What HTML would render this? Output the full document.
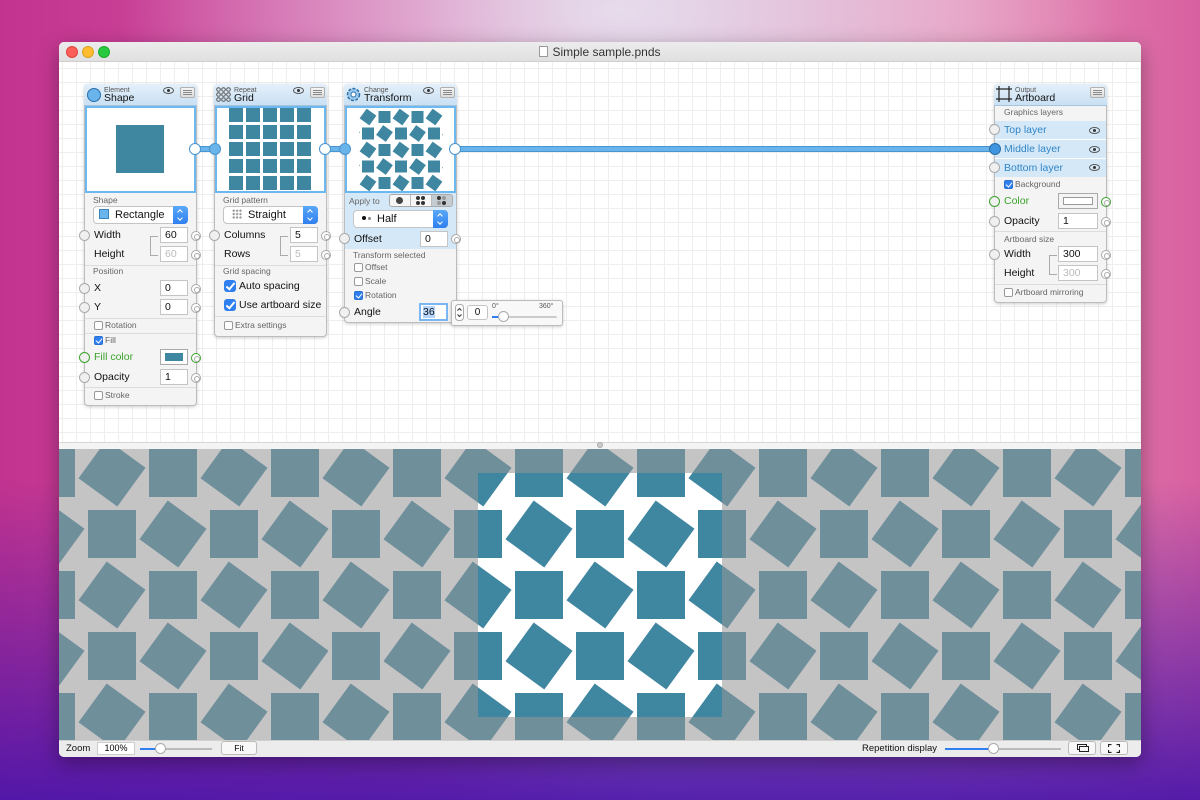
<!DOCTYPE html>
<html><head><meta charset="utf-8"><style>
*{box-sizing:border-box;margin:0;padding:0}
body{width:1200px;height:800px;overflow:hidden;position:relative;font-family:"Liberation Sans",sans-serif;
background:
radial-gradient(ellipse 500px 260px at 620px 10px,#e6dcec 0%,rgba(230,220,236,0) 100%),
linear-gradient(180deg,rgba(0,0,0,0) 60%,rgba(70,20,170,.9) 100%),
linear-gradient(90deg,#c2338f 0%,#d65aa6 35%,#dca0c8 55%,#e890b8 80%,#d860a0 100%);}
.a{position:absolute}
.win{position:absolute;left:59px;top:42px;width:1082px;height:715px;background:#fff;border-radius:5px;overflow:hidden;box-shadow:0 6px 20px rgba(0,0,0,.35)}
.title{position:absolute;left:0;top:0;width:1082px;height:20px;background:linear-gradient(#ececec,#e0e0e0);border-bottom:1px solid #cfcfcf;text-align:center;font-size:12px;line-height:20px;color:#333}
.dot{position:absolute;top:4px;width:12px;height:12px;border-radius:50%}
.editor{position:absolute;left:0;top:20px;width:1082px;height:380px;background-color:#fff;
background-image:linear-gradient(#eeeeee 1px,transparent 1px),linear-gradient(90deg,#eeeeee 1px,transparent 1px);background-size:14px 14px;background-position:3px 6px}
.node{position:absolute;background:#f4f4f4;border:1px solid #bdbdbd;border-radius:4px;box-shadow:0 1px 3px rgba(0,0,0,.2)}
.hdr{position:absolute;left:0;top:0;right:0;height:22px;background:linear-gradient(#e4f0fa,#c9e0f3);border-bottom:1px solid #a8c4dc;border-radius:3px 3px 0 0}
.t{position:absolute;font-size:10.5px;line-height:14px;color:#111;white-space:nowrap}
.s{position:absolute;font-size:8.5px;line-height:12px;color:#666;white-space:nowrap}
.sm{position:absolute;font-size:7px;line-height:8px;color:#555}
.in{position:absolute;height:16px;background:#fff;border:1px solid #c4c4c4;font-size:10.5px;line-height:14px;padding-left:4px;color:#111}
.dis{color:#bbb}
.sep{position:absolute;height:1px;background:#dcdcdc}
.cb{position:absolute;width:9px;height:9px;border:1px solid #999;border-radius:2px;background:#fff}
.cbc{background:#2f7ff0;border-color:#2a6fd0}
.cbc::after{content:"";position:absolute;left:2px;top:0px;width:3px;height:5px;border:solid #fff;border-width:0 1.5px 1.5px 0;transform:rotate(40deg)}
.bcb{position:absolute;width:12px;height:12px;border-radius:3px;background:#2f7ff0}
.bcb::after{content:"";position:absolute;left:4px;top:1px;width:3px;height:7px;border:solid #fff;border-width:0 2px 2px 0;transform:rotate(40deg)}
.pop{position:absolute;height:18px;background:#fff;border:1px solid #c4c4c4;border-radius:4px;font-size:11px;line-height:16px;color:#111}
.step{position:absolute;right:-1px;top:-1px;width:15px;height:18px;background:linear-gradient(#5aa8f8,#2f7ff0);border-radius:0 4px 4px 0}
.step::before{content:"";position:absolute;left:5px;top:4px;width:3px;height:3px;border:solid #fff;border-width:1px 0 0 1px;transform:rotate(45deg)}
.step::after{content:"";position:absolute;left:5px;top:10px;width:3px;height:3px;border:solid #fff;border-width:0 1px 1px 0;transform:rotate(45deg)}
.lc{position:absolute;width:11px;height:11px;border-radius:50%;background:#f0f0f0;border:1px solid #aaa}
.rc{position:absolute;width:10px;height:10px;border-radius:50%;background:#fff;border:1px solid #aaa}
.rc::after{content:"";position:absolute;left:2px;top:2px;width:4px;height:4px;border-radius:50%;border:1px solid #aaa}
.g{color:#3aa32a}
.bl{color:#2f86c8}
.menu{position:absolute;width:15px;height:11px;border:1px solid #b0b0b0;border-radius:2px;background:linear-gradient(#f4f4f4,#ddd)}
.menu::after{content:"";position:absolute;left:2px;top:2px;width:9px;height:1px;background:#888;box-shadow:0 2px 0 #888,0 4px 0 #888}
.eye{position:absolute;width:11px;height:7px;border:1px solid #555;border-radius:50%/50%}
.eye::after{content:"";position:absolute;left:3px;top:1px;width:3px;height:3px;border-radius:50%;background:#333}
.wire{position:absolute;height:6px;background:#6ab4ec;border:1px solid #4a94d0;border-radius:3px}
.hl{position:absolute;background:#d5e8f7}
.d{position:absolute;width:4px;height:4px;border-radius:50%;background:#333}
</style></head><body>
<div class="win">
 <div class="title"><span style="display:inline-block;width:9px;height:11px;border:1px solid #999;background:#fff;vertical-align:-1px;margin-right:4px"></span>Simple sample.pnds
  <div class="dot" style="left:7px;background:#fe5f57;border:1px solid #e0443e"></div>
  <div class="dot" style="left:23px;background:#febc2e;border:1px solid #dea123"></div>
  <div class="dot" style="left:39px;background:#28c840;border:1px solid #1aab29"></div>
 </div>
 <div class="editor"></div>
 <div class="a" style="left:0;top:400px;width:1082px;height:7px;background:#f4f4f4;border-top:1px solid #d6d6d6"></div>
 <div class="a" style="left:538px;top:400px;width:6px;height:6px;border-radius:50%;background:#ccc;border:1px solid #aaa"></div>
 <svg class="a" style="left:0;top:407px" width="1082" height="291">
  <defs>
   <rect id="sq" x="-24" y="-24" width="48" height="48" fill="#3f86a1"/>
   <g id="rq"><rect x="-24" y="-24" width="48" height="48" fill="#3f86a1" transform="rotate(36)"/></g>
   <pattern id="pt" patternUnits="userSpaceOnUse" x="419" y="24" width="122" height="122">
    <rect width="122" height="122" fill="#fff"/>
    <use href="#rq" x="0" y="0"/><use href="#rq" x="122" y="0"/><use href="#rq" x="0" y="122"/><use href="#rq" x="122" y="122"/><use href="#rq" x="61" y="61"/>
    <use href="#sq" x="61" y="0"/><use href="#sq" x="0" y="61"/><use href="#sq" x="122" y="61"/><use href="#sq" x="61" y="122"/>
   </pattern>
  </defs>
  <rect width="1082" height="291" fill="url(#pt)"/>
  <path fill-rule="evenodd" fill="rgba(150,150,150,0.56)" d="M0 0H1082V291H0Z M419 24V268H663V24Z"/>
 </svg>
 <div class="a" style="left:0;top:698px;width:1082px;height:17px;background:#ececec;border-top:1px solid #d0d0d0"></div>
</div>

<!-- wires -->
<div class="wire" style="left:193px;top:146px;width:24px"></div>
<div class="wire" style="left:323px;top:146px;width:24px"></div>
<div class="wire" style="left:451px;top:146px;width:546px"></div>

<!-- SHAPE NODE -->
<div class="node" style="left:84px;top:84px;width:113px;height:322px"></div>
<div class="hdr" style="left:84px;top:84px;width:113px;position:absolute"></div>
<div class="a" style="left:87px;top:88px;width:14px;height:14px;border-radius:50%;background:#6ab4ec;border:1.5px solid #2a6fa8"></div>
<div class="sm" style="left:104px;top:87px">Element</div>
<div class="t" style="left:104px;top:91px;font-size:10.5px">Shape</div>
<div class="eye" style="left:163px;top:87px"></div>
<div class="menu" style="left:180px;top:87px"></div>
<div class="a" style="left:85px;top:106px;width:111px;height:87px;background:#fff;border:2px solid #6cb8f0"></div>
<div class="a" style="left:116px;top:125px;width:48px;height:48px;background:#3f86a1"></div>
<div class="s" style="left:93px;top:194px">Shape</div>
<div class="pop" style="left:93px;top:206px;width:95px"><span style="display:inline-block;width:10px;height:10px;background:#6ab4ec;border:1px solid #3a84c0;margin:0 6px 0 5px;vertical-align:-1px"></span>Rectangle<div class="step"></div></div>
<div class="t" style="left:94px;top:228px">Width</div><div class="in" style="left:160px;top:227px;width:28px">60</div>
<div class="t" style="left:94px;top:247px">Height</div><div class="in dis" style="left:160px;top:246px;width:28px">60</div>
<div class="a" style="left:150px;top:236px;width:8px;height:20px;border:1px solid #aaa;border-right:none"></div>
<div class="sep" style="left:85px;top:265px;width:111px"></div>
<div class="s" style="left:93px;top:265px">Position</div>
<div class="t" style="left:94px;top:281px">X</div><div class="in" style="left:160px;top:280px;width:28px">0</div>
<div class="t" style="left:94px;top:300px">Y</div><div class="in" style="left:160px;top:299px;width:28px">0</div>
<div class="sep" style="left:85px;top:318px;width:111px"></div>
<div class="cb" style="left:94px;top:321px"></div><div class="s" style="left:105px;top:319px">Rotation</div>
<div class="sep" style="left:85px;top:333px;width:111px"></div>
<div class="cb cbc" style="left:94px;top:336px"></div><div class="s" style="left:105px;top:334px">Fill</div>
<div class="t g" style="left:94px;top:350px">Fill color</div>
<div class="a" style="left:160px;top:349px;width:28px;height:16px;background:#fff;border:1px solid #aaa;padding:3px 4px"><div style="width:100%;height:100%;background:#3f86a1"></div></div>
<div class="t" style="left:94px;top:370px">Opacity</div><div class="in" style="left:160px;top:369px;width:28px">1</div>
<div class="sep" style="left:85px;top:387px;width:111px"></div>
<div class="cb" style="left:94px;top:391px"></div><div class="s" style="left:105px;top:389px">Stroke</div>
<div class="lc" style="left:79px;top:230px"></div><div class="lc" style="left:79px;top:283px"></div><div class="lc" style="left:79px;top:302px"></div><div class="lc" style="left:79px;top:352px;border-color:#3aa32a"></div><div class="lc" style="left:79px;top:372px"></div>
<div class="rc" style="left:191px;top:231px"></div><div class="rc" style="left:191px;top:250px"></div><div class="rc" style="left:191px;top:284px"></div><div class="rc" style="left:191px;top:303px"></div><div class="rc" style="left:191px;top:353px;border-color:#3aa32a;background:#fff"></div><div class="rc" style="left:191px;top:373px"></div>
<div class="a" style="left:189px;top:143px;width:12px;height:12px;border-radius:50%;background:#fff;border:1.5px solid #4a94d0"></div>

<!-- GRID NODE -->
<div class="node" style="left:214px;top:84px;width:113px;height:253px"></div>
<div class="hdr" style="left:214px;top:84px;width:113px;position:absolute"></div>
<svg class="a" style="left:216px;top:87px" width="15" height="15"><g fill="none" stroke="#555" stroke-width="1"><circle cx="2.5" cy="2.5" r="1.8"/><circle cx="7.5" cy="2.5" r="1.8"/><circle cx="12.5" cy="2.5" r="1.8"/><circle cx="2.5" cy="7.5" r="1.8"/><circle cx="7.5" cy="7.5" r="1.8"/><circle cx="12.5" cy="7.5" r="1.8"/><circle cx="2.5" cy="12.5" r="1.8"/><circle cx="7.5" cy="12.5" r="1.8"/><circle cx="12.5" cy="12.5" r="1.8"/></g></svg>
<div class="sm" style="left:234px;top:87px">Repeat</div>
<div class="t" style="left:234px;top:91px">Grid</div>
<div class="eye" style="left:293px;top:87px"></div>
<div class="menu" style="left:310px;top:87px"></div>
<div class="a" style="left:215px;top:106px;width:111px;height:87px;background:#fff;border:2px solid #6cb8f0;overflow:hidden">
<svg width="107" height="83" style="position:absolute;left:0;top:0"><defs><pattern id="gp" patternUnits="userSpaceOnUse" x="12" y="0" width="17" height="17"><rect width="14" height="14" fill="#3f86a1"/></pattern></defs><rect x="12" y="0" width="82" height="83" fill="url(#gp)"/></svg></div>
<div class="s" style="left:223px;top:194px">Grid pattern</div>
<div class="pop" style="left:223px;top:206px;width:95px"><span style="display:inline-block;width:10px;height:10px;margin:0 6px 0 8px;vertical-align:-1px;background-image:radial-gradient(circle,#999 1px,transparent 1.3px);background-size:3.4px 3.4px"></span>Straight<div class="step"></div></div>
<div class="t" style="left:224px;top:228px">Columns</div><div class="in" style="left:290px;top:227px;width:28px">5</div>
<div class="t" style="left:224px;top:247px">Rows</div><div class="in dis" style="left:290px;top:246px;width:28px">5</div>
<div class="a" style="left:280px;top:236px;width:8px;height:20px;border:1px solid #aaa;border-right:none"></div>
<div class="sep" style="left:215px;top:265px;width:111px"></div>
<div class="s" style="left:223px;top:265px">Grid spacing</div>
<div class="bcb" style="left:224px;top:280px"></div><div class="t" style="left:239px;top:279px">Auto spacing</div>
<div class="bcb" style="left:224px;top:299px"></div><div class="t" style="left:239px;top:298px">Use artboard size</div>
<div class="sep" style="left:215px;top:316px;width:111px"></div>
<div class="cb" style="left:224px;top:321px"></div><div class="s" style="left:235px;top:319px">Extra settings</div>
<div class="lc" style="left:209px;top:230px"></div>
<div class="rc" style="left:321px;top:231px"></div><div class="rc" style="left:321px;top:250px"></div>
<div class="a" style="left:209px;top:143px;width:12px;height:12px;border-radius:50%;background:#6ab4ec;border:1.5px solid #4a94d0"></div>
<div class="a" style="left:319px;top:143px;width:12px;height:12px;border-radius:50%;background:#fff;border:1.5px solid #4a94d0"></div>

<!-- TRANSFORM NODE -->
<div class="node" style="left:344px;top:84px;width:113px;height:239px"></div>
<div class="hdr" style="left:344px;top:84px;width:113px;position:absolute"></div>
<svg class="a" style="left:346px;top:87px" width="15" height="15"><circle cx="7.5" cy="7.5" r="6" fill="#9cc8ec" stroke="#2a6fa8" stroke-width="1.5" stroke-dasharray="3 1.5"/><circle cx="7.5" cy="7.5" r="2.5" fill="#fff" stroke="#2a6fa8"/></svg>
<div class="sm" style="left:364px;top:87px">Change</div>
<div class="t" style="left:364px;top:91px">Transform</div>
<div class="eye" style="left:423px;top:87px"></div>
<div class="menu" style="left:440px;top:87px"></div>
<div class="a" style="left:345px;top:106px;width:111px;height:87px;background:#fff;border:2px solid #6cb8f0;overflow:hidden">
<svg width="107" height="83" style="position:absolute;left:0;top:0"><defs>
<rect id="s2" x="-6" y="-6" width="12" height="12" fill="#3f86a1"/>
<g id="r2"><rect x="-6" y="-6" width="12" height="12" fill="#3f86a1" transform="rotate(36)"/></g>
<pattern id="tp" patternUnits="userSpaceOnUse" x="21" y="9" width="33" height="33">
<use href="#r2" x="0" y="0"/><use href="#r2" x="33" y="0"/><use href="#r2" x="0" y="33"/><use href="#r2" x="33" y="33"/><use href="#r2" x="16.5" y="16.5"/>
<use href="#s2" x="16.5" y="0"/><use href="#s2" x="0" y="16.5"/><use href="#s2" x="33" y="16.5"/><use href="#s2" x="16.5" y="33"/>
</pattern></defs><rect x="12" y="1" width="84" height="82" fill="url(#tp)"/></svg></div>
<div class="hl" style="left:345px;top:193px;width:111px;height:56px"></div>
<div class="s" style="left:349px;top:195px">Apply to</div>
<div class="a" style="left:389px;top:194px;width:64px;height:13px;border:1px solid #aaa;border-radius:3px;background:#f6f6f6"></div>
<div class="a" style="left:410px;top:195px;width:1px;height:11px;background:#bbb"></div>
<div class="a" style="left:431px;top:195px;width:21px;height:11px;background:#c4ccd2;border-left:1px solid #bbb;border-radius:0 2px 2px 0"></div>
<div class="a" style="left:396px;top:197px;width:7px;height:7px;border-radius:50%;background:#444"></div>
<div class="d" style="left:416px;top:196px"></div><div class="d" style="left:421px;top:196px"></div><div class="d" style="left:416px;top:201px"></div><div class="d" style="left:421px;top:201px"></div>
<div class="d" style="left:437px;top:196px"></div><div class="d" style="left:442px;top:196px;background:#999"></div><div class="d" style="left:437px;top:201px;background:#999"></div><div class="d" style="left:442px;top:201px"></div>
<div class="pop" style="left:353px;top:210px;width:95px"><span style="display:inline-block;width:4px;height:4px;border-radius:50%;background:#111;margin:0 2px 2px 8px"></span><span style="display:inline-block;width:3px;height:3px;border-radius:50%;background:#888;margin:0 6px 2px 0"></span>Half<div class="step"></div></div>
<div class="t" style="left:354px;top:232px">Offset</div><div class="in" style="left:420px;top:231px;width:28px">0</div>
<div class="s" style="left:353px;top:249px">Transform selected</div>
<div class="cb" style="left:354px;top:263px"></div><div class="s" style="left:365px;top:261px">Offset</div>
<div class="cb" style="left:354px;top:277px"></div><div class="s" style="left:365px;top:275px">Scale</div>
<div class="cb cbc" style="left:354px;top:291px"></div><div class="s" style="left:365px;top:289px">Rotation</div>
<div class="t" style="left:354px;top:305px">Angle</div>
<div class="in" style="left:419px;top:303px;width:29px;height:18px;border:2px solid #7ab6f2;padding-left:2px"><span style="background:#b5d5fb">36</span></div>
<div class="lc" style="left:339px;top:233px"></div><div class="lc" style="left:339px;top:307px"></div>
<div class="rc" style="left:451px;top:234px"></div>
<div class="a" style="left:339px;top:143px;width:12px;height:12px;border-radius:50%;background:#6ab4ec;border:1.5px solid #4a94d0"></div>
<div class="a" style="left:449px;top:143px;width:12px;height:12px;border-radius:50%;background:#fff;border:1.5px solid #4a94d0"></div>
<!-- angle popup -->
<div class="a" style="left:451px;top:300px;width:112px;height:26px;background:#f8f8f8;border:1px solid #bbb;border-radius:3px;box-shadow:0 1px 3px rgba(0,0,0,.2)"></div>
<svg class="a" style="left:455px;top:304px" width="9" height="17"><rect x=".5" y=".5" width="8" height="16" rx="3" fill="#fff" stroke="#aaa"/><path d="M2.5 6.5L4.5 4.5L6.5 6.5M2.5 10.5L4.5 12.5L6.5 10.5" fill="none" stroke="#333"/></svg>
<div class="in" style="left:467px;top:305px;width:21px;height:15px;border-radius:3px;font-size:10px;line-height:13px;text-align:center;padding:0">0</div>
<div class="sm" style="left:492px;top:303px">0°</div><div class="sm" style="left:539px;top:303px">360°</div>
<div class="a" style="left:492px;top:316px;width:65px;height:2px;background:#ccc;border-radius:1px"></div>
<div class="a" style="left:492px;top:316px;width:12px;height:2px;background:#2f7ff0"></div>
<div class="a" style="left:498px;top:311px;width:11px;height:11px;border-radius:50%;background:#fff;border:1px solid #aaa"></div>

<!-- ARTBOARD NODE -->
<div class="node" style="left:994px;top:84px;width:113px;height:219px"></div>
<div class="hdr" style="left:994px;top:84px;width:113px;position:absolute"></div>
<svg class="a" style="left:996px;top:86px" width="16" height="16"><g stroke="#222" stroke-width="1.2" fill="none"><path d="M3 0V16M13 0V16M0 3H16M0 13H16"/></g></svg>
<div class="sm" style="left:1015px;top:87px">Output</div>
<div class="t" style="left:1015px;top:91px">Artboard</div>
<div class="menu" style="left:1090px;top:87px"></div>
<div class="s" style="left:1004px;top:106px">Graphics layers</div>
<div class="hl" style="left:995px;top:121px;width:111px;height:56px"></div>
<div class="sep" style="left:995px;top:139px;width:111px;background:#fff"></div>
<div class="sep" style="left:995px;top:158px;width:111px;background:#fff"></div>
<div class="t bl" style="left:1004px;top:123px">Top layer</div><div class="eye" style="left:1089px;top:127px"></div>
<div class="t bl" style="left:1004px;top:142px">Middle layer</div><div class="eye" style="left:1089px;top:146px"></div>
<div class="t bl" style="left:1004px;top:161px">Bottom layer</div><div class="eye" style="left:1089px;top:164px"></div>
<div class="lc" style="left:989px;top:124px"></div><div class="lc" style="left:989px;top:162px"></div>
<div class="a" style="left:989px;top:143px;width:12px;height:12px;border-radius:50%;background:#3f95e0;border:1.5px solid #2a6fa8"></div>
<div class="cb cbc" style="left:1004px;top:180px"></div><div class="s" style="left:1015px;top:178px">Background</div>
<div class="t g" style="left:1004px;top:194px">Color</div>
<div class="a" style="left:1058px;top:193px;width:40px;height:16px;background:#f4f4f4;border:1px solid #aaa;padding:3px 4px"><div style="width:100%;height:100%;background:#fff;border:1px solid #999"></div></div>
<div class="t" style="left:1004px;top:214px">Opacity</div><div class="in" style="left:1058px;top:213px;width:40px">1</div>
<div class="sep" style="left:995px;top:231px;width:111px"></div>
<div class="s" style="left:1004px;top:233px">Artboard size</div>
<div class="t" style="left:1004px;top:247px">Width</div><div class="in" style="left:1058px;top:246px;width:40px">300</div>
<div class="t" style="left:1004px;top:266px">Height</div><div class="in dis" style="left:1058px;top:265px;width:40px">300</div>
<div class="a" style="left:1049px;top:255px;width:8px;height:20px;border:1px solid #aaa;border-right:none"></div>
<div class="sep" style="left:995px;top:284px;width:111px"></div>
<div class="cb" style="left:1004px;top:288px"></div><div class="s" style="left:1015px;top:286px">Artboard mirroring</div>
<div class="lc" style="left:989px;top:196px;border-color:#3aa32a"></div><div class="lc" style="left:989px;top:216px"></div><div class="lc" style="left:989px;top:249px"></div>
<div class="rc" style="left:1101px;top:197px;border-color:#3aa32a"></div><div class="rc" style="left:1101px;top:217px"></div><div class="rc" style="left:1101px;top:250px"></div><div class="rc" style="left:1101px;top:269px"></div>

<!-- status bar -->
<div class="t" style="left:66px;top:742px;font-size:9.5px">Zoom</div>
<div class="a" style="left:97px;top:742px;width:38px;height:13px;background:#fff;border:1px solid #ccc;font-size:9px;line-height:11px;text-align:center">100%</div>
<div class="a" style="left:140px;top:748px;width:72px;height:2px;background:#bbb"></div>
<div class="a" style="left:140px;top:748px;width:20px;height:2px;background:#2f7ff0"></div>
<div class="a" style="left:155px;top:743px;width:11px;height:11px;border-radius:50%;background:#fff;border:1px solid #aaa"></div>
<div class="a" style="left:221px;top:741px;width:36px;height:14px;background:#f8f8f8;border:1px solid #bbb;border-radius:3px;font-size:8.5px;line-height:12px;text-align:center">Fit</div>
<div class="t" style="left:862px;top:742px;font-size:9.5px">Repetition display</div>
<div class="a" style="left:945px;top:748px;width:116px;height:2px;background:#bbb"></div>
<div class="a" style="left:945px;top:748px;width:49px;height:2px;background:#2f7ff0"></div>
<div class="a" style="left:988px;top:743px;width:11px;height:11px;border-radius:50%;background:#fff;border:1px solid #aaa"></div>
<div class="a" style="left:1068px;top:741px;width:28px;height:14px;background:#f8f8f8;border:1px solid #bbb;border-radius:3px"><div style="position:absolute;left:8px;top:2px;width:10px;height:6px;border:1px solid #222"></div><div style="position:absolute;left:10px;top:4px;width:10px;height:6px;border:1px solid #222;background:#f8f8f8"></div></div>
<div class="a" style="left:1100px;top:741px;width:28px;height:14px;background:#f8f8f8;border:1px solid #bbb;border-radius:3px"></div>
<svg class="a" style="left:1108px;top:744px" width="12" height="9"><path d="M0.5 3V0.5H3.5M8.5 0.5H11.5V3M11.5 6V8.5H8.5M3.5 8.5H0.5V6" fill="none" stroke="#222" stroke-width="1.2"/></svg>
</body></html>
